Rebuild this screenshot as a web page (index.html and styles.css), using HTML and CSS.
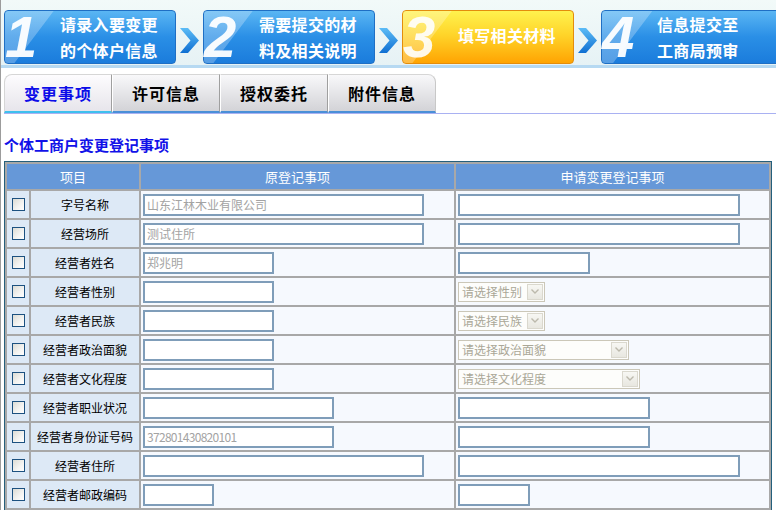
FILE: index.html
```html
<!DOCTYPE html>
<html lang="zh-CN">
<head>
<meta charset="utf-8">
<title>个体工商户变更登记</title>
<link rel="stylesheet" href="styles.css">
</head>
<body>
<div class="page">
  <div class="steps">
    <div class="step blue"><span class="num">1</span><span class="txt">请录入要变更<br>的个体户信息</span></div>
    <div class="arrow"><svg width="20" height="25" viewBox="0 0 20 25"><defs><linearGradient id="ag1" x1="0" y1="0" x2="0" y2="1"><stop offset="0" stop-color="#5cbcf6"/><stop offset="1" stop-color="#0f6fd2"/></linearGradient></defs><polygon points="0,0 8,0 19,12.5 8,25 0,25 10.5,12.5" fill="url(#ag1)"/></svg></div>
    <div class="step blue"><span class="num">2</span><span class="txt">需要提交的材<br>料及相关说明</span></div>
    <div class="arrow"><svg width="20" height="25" viewBox="0 0 20 25"><polygon points="0,0 8,0 19,12.5 8,25 0,25 10.5,12.5" fill="url(#ag1)"/></svg></div>
    <div class="step orange"><span class="num">3</span><span class="txt">填写相关材料</span></div>
    <div class="arrow"><svg width="20" height="25" viewBox="0 0 20 25"><polygon points="0,0 8,0 19,12.5 8,25 0,25 10.5,12.5" fill="url(#ag1)"/></svg></div>
    <div class="step blue last"><span class="num">4</span><span class="txt">信息提交至<br>工商局预审</span></div>
  </div>

  <div class="tabs">
    <div class="tab active">变更事项</div>
    <div class="tab">许可信息</div>
    <div class="tab">授权委托</div>
    <div class="tab end">附件信息</div>
  </div>

  <div class="title">个体工商户变更登记事项</div>

  <table class="grid">
    <colgroup>
      <col class="w1"><col class="w2"><col class="w3"><col class="w4">
    </colgroup>
    <thead>
      <tr><th colspan="2">项目</th><th>原登记事项</th><th>申请变更登记事项</th></tr>
    </thead>
    <tbody>
      <tr>
        <td class="c1"><input type="checkbox" class="cb"></td>
        <td class="c2">字号名称</td>
        <td class="c3"><input class="t wl" value="山东江林木业有限公司"></td>
        <td class="c4"><input class="t wL"></td>
      </tr>
      <tr>
        <td class="c1"><input type="checkbox" class="cb"></td>
        <td class="c2">经营场所</td>
        <td class="c3"><input class="t wl" value="测试住所"></td>
        <td class="c4"><input class="t wL"></td>
      </tr>
      <tr>
        <td class="c1"><input type="checkbox" class="cb"></td>
        <td class="c2">经营者姓名</td>
        <td class="c3"><input class="t wm" value="郑兆明"></td>
        <td class="c4"><input class="t wM"></td>
      </tr>
      <tr>
        <td class="c1"><input type="checkbox" class="cb"></td>
        <td class="c2">经营者性别</td>
        <td class="c3"><input class="t wm"></td>
        <td class="c4"><div class="sel s1"><span class="stxt">请选择性别</span><span class="btn"><svg width="8" height="5" viewBox="0 0 8 5"><polyline points="0.5,0.5 4,4 7.5,0.5" fill="none" stroke="#bcb9ac" stroke-width="1.4"/></svg></span></div></td>
      </tr>
      <tr>
        <td class="c1"><input type="checkbox" class="cb"></td>
        <td class="c2">经营者民族</td>
        <td class="c3"><input class="t wm"></td>
        <td class="c4"><div class="sel s1"><span class="stxt">请选择民族</span><span class="btn"><svg width="8" height="5" viewBox="0 0 8 5"><polyline points="0.5,0.5 4,4 7.5,0.5" fill="none" stroke="#bcb9ac" stroke-width="1.4"/></svg></span></div></td>
      </tr>
      <tr>
        <td class="c1"><input type="checkbox" class="cb"></td>
        <td class="c2">经营者政治面貌</td>
        <td class="c3"><input class="t wm"></td>
        <td class="c4"><div class="sel s2"><span class="stxt">请选择政治面貌</span><span class="btn"><svg width="8" height="5" viewBox="0 0 8 5"><polyline points="0.5,0.5 4,4 7.5,0.5" fill="none" stroke="#bcb9ac" stroke-width="1.4"/></svg></span></div></td>
      </tr>
      <tr>
        <td class="c1"><input type="checkbox" class="cb"></td>
        <td class="c2">经营者文化程度</td>
        <td class="c3"><input class="t wm"></td>
        <td class="c4"><div class="sel s3"><span class="stxt">请选择文化程度</span><span class="btn"><svg width="8" height="5" viewBox="0 0 8 5"><polyline points="0.5,0.5 4,4 7.5,0.5" fill="none" stroke="#bcb9ac" stroke-width="1.4"/></svg></span></div></td>
      </tr>
      <tr>
        <td class="c1"><input type="checkbox" class="cb"></td>
        <td class="c2">经营者职业状况</td>
        <td class="c3"><input class="t wx"></td>
        <td class="c4"><input class="t wX"></td>
      </tr>
      <tr>
        <td class="c1"><input type="checkbox" class="cb"></td>
        <td class="c2">经营者身份证号码</td>
        <td class="c3"><input class="t wx num-val" value="372801430820101"></td>
        <td class="c4"><input class="t wX"></td>
      </tr>
      <tr>
        <td class="c1"><input type="checkbox" class="cb"></td>
        <td class="c2">经营者住所</td>
        <td class="c3"><input class="t wl"></td>
        <td class="c4"><input class="t wL"></td>
      </tr>
      <tr>
        <td class="c1"><input type="checkbox" class="cb"></td>
        <td class="c2">经营者邮政编码</td>
        <td class="c3"><input class="t ws"></td>
        <td class="c4"><input class="t wS"></td>
      </tr>
    </tbody>
  </table>
</div>
</body>
</html>
```

FILE: styles.css
```css
html, body {
  margin: 0;
  padding: 0;
  background: #ffffff;
}
body {
  width: 776px;
  height: 510px;
  overflow: hidden;
  font-family: "Noto Sans CJK SC", "Liberation Sans", sans-serif;
}
.page {
  border-left: 1px solid #9c9c9c;
  min-height: 510px;
  box-sizing: border-box;
}

/* ---------- steps header ---------- */
.steps {
  display: flex;
  align-items: flex-start;
  height: 68px;
  box-sizing: border-box;
  padding: 10px 0 0 3px;
  background: linear-gradient(#f2faf9, #e6f2f5);
  border-bottom: 3px solid #b6d9f2;
}
.step {
  position: relative;
  box-sizing: border-box;
  width: 172px;
  height: 54px;
  flex: none;
  border: 1px solid #1f6fc4;
  border-radius: 4px;
  display: flex;
  align-items: center;
}
.step::before {
  content: "";
  position: absolute;
  left: 0; top: 0; right: 0; bottom: 0;
  border-radius: 3px;
  background: linear-gradient(127deg, rgba(255,255,255,0.26) 0, rgba(255,255,255,0.26) 23%, rgba(255,255,255,0) 23.5%);
}
.step.blue {
  background: linear-gradient(#5ab6f3, #2a8fe6 50%, #1b7cdc);
}
.step.orange {
  background: linear-gradient(#fff24e, #ffd52a 45%, #ffa402);
  border-color: #e38d0c;
}
.step.last {
  flex: 1;
  margin-right: -4px;
}
.step .num {
  position: relative;
  width: 55px;
  flex: none;
  box-sizing: border-box;
  font: italic bold 58px/52px "Liberation Sans", sans-serif;
  color: rgba(255,255,255,0.95);
  text-align: left;
}
.step.orange .num {
  color: rgba(255,255,255,0.9);
}
.step .txt {
  position: relative;
  font: bold 16px/26px "Noto Sans CJK SC", sans-serif;
  color: #ffffff;
  letter-spacing: 0.3px;
  white-space: nowrap;
}
.step.orange .txt {
  margin-top: -4px;
}
.arrow {
  width: 27px;
  flex: none;
  display: flex;
  justify-content: center;
  padding-top: 18px;
  padding-left: 1px;
  box-sizing: border-box;
}

/* ---------- tabs ---------- */
.tabs {
  display: flex;
  margin: 6px 0 0 3px;
  border-bottom: 1px solid #a9b1f2;
}
.tab {
  box-sizing: border-box;
  width: 108px;
  height: 39px;
  border-top: 1px solid #d6d6d6;
  border-left: 1px solid #ffffff;
  border-right: 1px solid #9f9f9f;
  border-bottom: 2px solid #4a8fd8;
  background: linear-gradient(#f8f8fa, #d3d3d7);
  font: bold 16px/36px "Noto Sans CJK SC", sans-serif;
  letter-spacing: 1px;
  text-align: center;
  color: #000000;
}
.tab.active {
  color: #0c0ce8;
  background: linear-gradient(#fdfcfe, #e7e5eb);
  border-bottom-color: #3fc0ee;
  border-top-left-radius: 8px;
  border-left-color: #d6d6d6;
}
.tab.end {
  border-top-right-radius: 8px;
  border-right-color: #c8c8c8;
}

/* ---------- title ---------- */
.title {
  margin: 21px 0 6px 3px;
  font: bold 15px/20px "Noto Sans CJK SC", sans-serif;
  color: #1212e8;
}

/* ---------- grid ---------- */
.grid {
  margin-left: 3px;
  border: 1px solid #245f7c;
  border-spacing: 2px;
  background: #a8a8a8;
  table-layout: fixed;
  width: 768px;
}
.w1 { width: 22px; }
.w2 { width: 108px; }
.w3 { width: 313px; }
.w4 { width: 313px; }
.grid th {
  height: 25px;
  padding: 0;
  background: #6698d8;
  color: #ffffff;
  font: 13px "Noto Sans CJK SC", sans-serif;
  font-weight: normal;
  text-align: center;
}
.grid td {
  height: 27px;
  padding: 0;
  vertical-align: middle;
}
.c1, .c2 {
  background: #dde9f6;
}
.c3, .c4 {
  background: #f6f9fe;
}
.c2 {
  font-size: 12px;
  text-align: center;
  color: #000000;
  white-space: nowrap;
}
.cb {
  appearance: none;
  -webkit-appearance: none;
  display: block;
  box-sizing: border-box;
  width: 13px;
  height: 13px;
  margin: 0 auto;
  border: 1px solid #1c5180;
  background: linear-gradient(135deg, #dcdcd5, #f4f4f2 60%, #ffffff);
}
.t {
  display: block;
  box-sizing: border-box;
  height: 22px;
  margin: 0 0 0 2px;
  padding: 0 2px;
  border: 2px solid #7f9db9;
  background: #ffffff;
  font: 12px "Noto Sans CJK SC", sans-serif;
  color: #a3a3a3;
  outline: none;
}
.num-val {
  letter-spacing: -0.7px;
}
.wl { width: 281px; }
.wL { width: 282px; }
.wm { width: 131px; }
.wM { width: 132px; }
.wx { width: 191px; }
.wX { width: 192px; }
.ws { width: 71px; }
.wS { width: 72px; }

.sel {
  display: flex;
  align-items: center;
  box-sizing: border-box;
  height: 20px;
  margin-left: 2px;
  border: 1px solid #cbc7b8;
  background: #fdfdfb;
  padding: 1px;
}
.s1 { width: 87px; }
.s2 { width: 171px; }
.s3 { width: 182px; }
.stxt {
  flex: 1;
  font-size: 12px;
  line-height: 16px;
  color: #aaa797;
  padding-left: 2px;
  white-space: nowrap;
}
.btn {
  flex: none;
  box-sizing: border-box;
  width: 16px;
  height: 16px;
  border: 1px solid #dad8ce;
  background: linear-gradient(#f7f7f3, #e8e7e0);
  display: flex;
  align-items: center;
  justify-content: center;
}
```
